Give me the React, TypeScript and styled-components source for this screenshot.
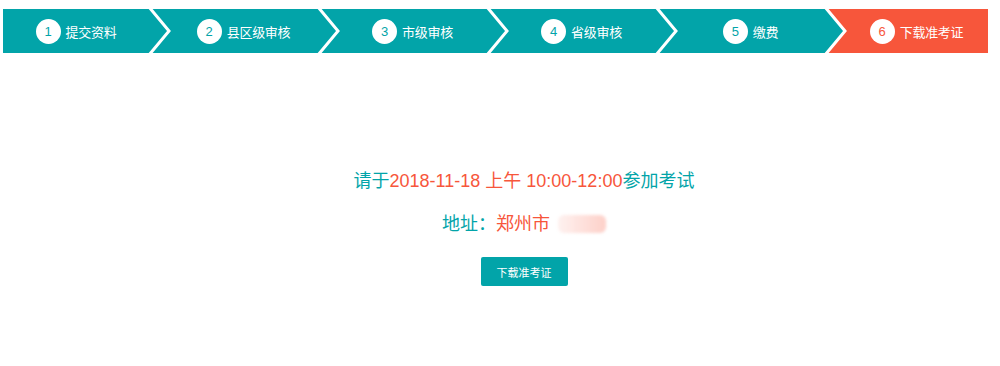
import React from "react";
import styled, { createGlobalStyle } from "styled-components";

const TEAL = "#02a4a9";
const ORANGE = "#f7563b";

const Global = createGlobalStyle`
  html, body { margin: 0; padding: 0; background: #fff; }
  body { font-family: "Liberation Sans", Arial, "Noto Sans CJK SC", sans-serif; }
`;

const Page = styled.div`
  padding: 9px 12px 0 3px;
`;

const StepBar = styled.ol`
  display: flex;
  height: 44px;
  margin: 0;
  padding: 0;
  list-style: none;
`;

const Step = styled.li<{ $w: number; $active: boolean; $first: boolean }>`
  position: relative;
  flex: 0 0 ${(p) => p.$w}px;
  display: flex;
  align-items: center;
  justify-content: center;
  gap: 5px;
  padding-left: ${(p) => (p.$first ? 0 : 20)}px;
  box-sizing: border-box;
  background: ${(p) => (p.$active ? ORANGE : TEAL)};
  color: #fff;
  font-size: 13px;
  font-family: "Noto Sans CJK SC", "Liberation Sans", sans-serif;
`;

const Num = styled.span<{ $active: boolean }>`
  width: 25px;
  height: 25px;
  border-radius: 50%;
  background: #fff;
  color: ${(p) => (p.$active ? ORANGE : TEAL)};
  display: flex;
  align-items: center;
  justify-content: center;
  font-family: "Liberation Sans", Arial, sans-serif;
  font-size: 13px;
`;

const Label = styled.span`
  line-height: 1;
  letter-spacing: -0.3px;
`;

const Arrow = styled.svg`
  position: absolute;
  top: 0;
  left: calc(100% - 2px);
  width: 24px;
  height: 44px;
  z-index: 1;
  overflow: visible;
`;

const Content = styled.div`
  display: flex;
  flex-direction: column;
  align-items: center;
  margin-top: 116px;
  padding-left: 57px;
`;

const Line = styled.p<{ $mt?: number }>`
  margin: ${(p) => p.$mt ?? 0}px 0 0;
  font-size: 18px;
  line-height: 24px;
  color: ${TEAL};
  font-family: "Liberation Sans", Arial, "Noto Sans CJK SC", sans-serif;
  white-space: pre;
`;

const Hi = styled.span`
  color: ${ORANGE};
`;

const Blur = styled.span`
  display: inline-block;
  width: 48px;
  height: 18px;
  margin-left: 8px;
  vertical-align: -3px;
  border-radius: 6px;
  background: linear-gradient(90deg, rgba(247, 86, 59, 0.08), rgba(247, 86, 59, 0.28));
  filter: blur(1.5px);
`;

const Button = styled.button`
  margin-top: 21px;
  height: 29px;
  padding: 0 16px;
  border: none;
  border-radius: 2px;
  background: ${TEAL};
  color: #fff;
  font-size: 11px;
  font-family: "Noto Sans CJK SC", sans-serif;
  cursor: pointer;
`;

const steps = [
  { n: 1, t: "提交资料", w: 146 },
  { n: 2, t: "县区级审核", w: 169 },
  { n: 3, t: "市级审核", w: 169 },
  { n: 4, t: "省级审核", w: 169 },
  { n: 5, t: "缴费", w: 169 },
  { n: 6, t: "下载准考证", w: 163 },
];

export default function App() {
  return (
    <Page>
      <Global />
      <StepBar>
        {steps.map((s, i) => {
          const active = s.n === 6;
          const color = active ? ORANGE : TEAL;
          return (
            <Step key={s.n} $w={s.w} $active={active} $first={i === 0}>
              <Num $active={active}>{s.n}</Num>
              <Label>{s.t}</Label>
              {i < steps.length - 1 && (
                <Arrow viewBox="0 0 24 44">
                  <polygon points="0,0 2,0 22,22 2,44 0,44" fill={color} />
                  <polyline
                    points="2,-2 22,22 2,46"
                    fill="none"
                    stroke="#fff"
                    strokeWidth="3"
                  />
                </Arrow>
              )}
            </Step>
          );
        })}
      </StepBar>
      <Content>
        <Line>
          请于<Hi>2018-11-18 上午 10:00-12:00</Hi>参加考试
        </Line>
        <Line $mt={19}>
          地址：<Hi>郑州市</Hi>
          <Blur />
        </Line>
        <Button>下载准考证</Button>
      </Content>
    </Page>
  );
}
